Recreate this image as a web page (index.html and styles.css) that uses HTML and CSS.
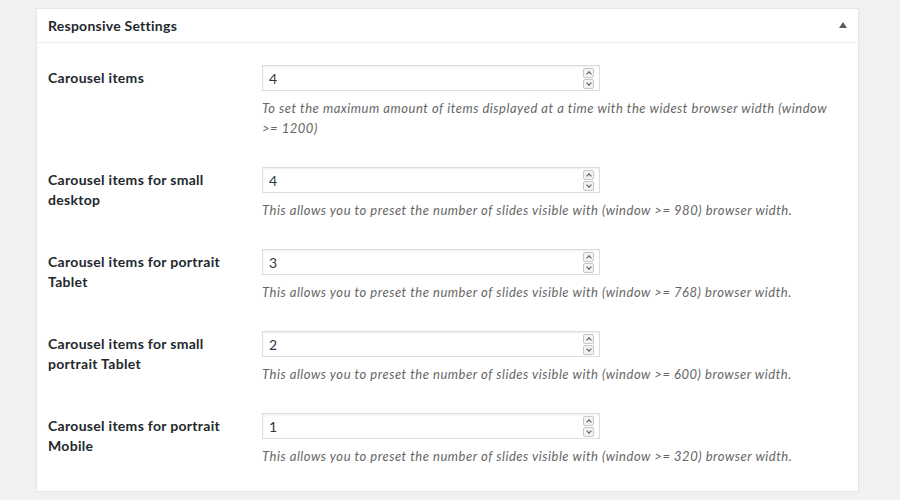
FILE: index.html
```html
<!DOCTYPE html>
<html>
<head>
<meta charset="utf-8">
<link rel="stylesheet" href="styles.css">
</head>
<body>
<div class="postbox">
  <div class="hndle">
    <h2>Responsive Settings</h2>
    <span class="toggle"></span>
  </div>
  <div class="inside">
    <div class="row">
      <div class="label">Carousel items</div>
      <div class="field">
        <div class="input"><span class="val">4</span><span class="spin"><i class="up"></i><i class="down"></i></span></div>
        <p class="desc">To set the maximum amount of items displayed at a time with the widest browser width (window &gt;= 1200)</p>
      </div>
    </div>
    <div class="row">
      <div class="label">Carousel items for small desktop</div>
      <div class="field">
        <div class="input"><span class="val">4</span><span class="spin"><i class="up"></i><i class="down"></i></span></div>
        <p class="desc">This allows you to preset the number of slides visible with (window &gt;= 980) browser width.</p>
      </div>
    </div>
    <div class="row">
      <div class="label">Carousel items for portrait Tablet</div>
      <div class="field">
        <div class="input"><span class="val">3</span><span class="spin"><i class="up"></i><i class="down"></i></span></div>
        <p class="desc">This allows you to preset the number of slides visible with (window &gt;= 768) browser width.</p>
      </div>
    </div>
    <div class="row">
      <div class="label">Carousel items for small portrait Tablet</div>
      <div class="field">
        <div class="input"><span class="val">2</span><span class="spin"><i class="up"></i><i class="down"></i></span></div>
        <p class="desc">This allows you to preset the number of slides visible with (window &gt;= 600) browser width.</p>
      </div>
    </div>
    <div class="row">
      <div class="label">Carousel items for portrait Mobile</div>
      <div class="field">
        <div class="input"><span class="val">1</span><span class="spin"><i class="up"></i><i class="down"></i></span></div>
        <p class="desc">This allows you to preset the number of slides visible with (window &gt;= 320) browser width.</p>
      </div>
    </div>
  </div>
</div>
</body>
</html>
```
FILE: styles.css
```css
html, body {
  margin: 0;
  padding: 0;
  background: #f1f1f1;
}
body {
  padding: 8px 40px 0 36px;
  font-family: Lato, "Open Sans", sans-serif;
  color: #23282d;
}
.postbox {
  background: #fff;
  border: 1px solid #e5e5e5;
  box-shadow: 0 1px 1px rgba(0,0,0,0.04);
  width: 823px;
  box-sizing: border-box;
}
.hndle {
  display: flex;
  align-items: center;
  justify-content: space-between;
  height: 33px;
  padding: 0 11px 0 11px;
  border-bottom: 1px solid #eee;
}
.hndle h2 {
  margin: -1px 0 0;
  font-size: 14px;
  font-weight: 700;
  letter-spacing: 0.25px;
  color: #23282d;
}
.toggle {
  width: 0;
  height: 0;
  border-left: 4px solid transparent;
  border-right: 4px solid transparent;
  border-bottom: 6px solid #555d66;
  margin-top: -1px;
}
.inside {
  padding: 6px 12px 12px 11px;
}
.row {
  display: flex;
  padding: 16px 0 13px;
}
.label {
  width: 214px;
  flex: none;
  box-sizing: border-box;
  padding: 3px 20px 0 0;
  font-size: 14px;
  font-weight: 700;
  line-height: 20px;
  letter-spacing: 0.3px;
  color: #23282d;
}
.field {
  flex: 1;
}
.input {
  width: 338px;
  height: 26px;
  box-sizing: border-box;
  border: 1px solid #ddd;
  box-shadow: inset 0 1px 2px rgba(0,0,0,0.07);
  display: flex;
  align-items: center;
  justify-content: space-between;
  padding: 0 5px 0 6px;
}
.val {
  font-size: 14px;
  color: #32373c;
}
.spin {
  display: flex;
  flex-direction: column;
  gap: 1px;
}
.spin i {
  display: block;
  width: 11px;
  height: 10px;
  box-sizing: border-box;
  border: 1px solid #c8c8c8;
  border-radius: 2px;
  background: #f3f3f3;
  position: relative;
}
.spin i::after {
  content: "";
  position: absolute;
  left: 3px;
  width: 3px;
  height: 3px;
  border-left: 1px solid #555;
  border-top: 1px solid #555;
}
.spin .up::after {
  top: 3px;
  transform: rotate(45deg);
}
.spin .down::after {
  top: 1px;
  transform: rotate(225deg);
}
.desc {
  margin: 7px 0 0;
  max-width: 574px;
  font-size: 13px;
  font-style: italic;
  line-height: 20px;
  letter-spacing: 0.52px;
  color: #666;
}
```
